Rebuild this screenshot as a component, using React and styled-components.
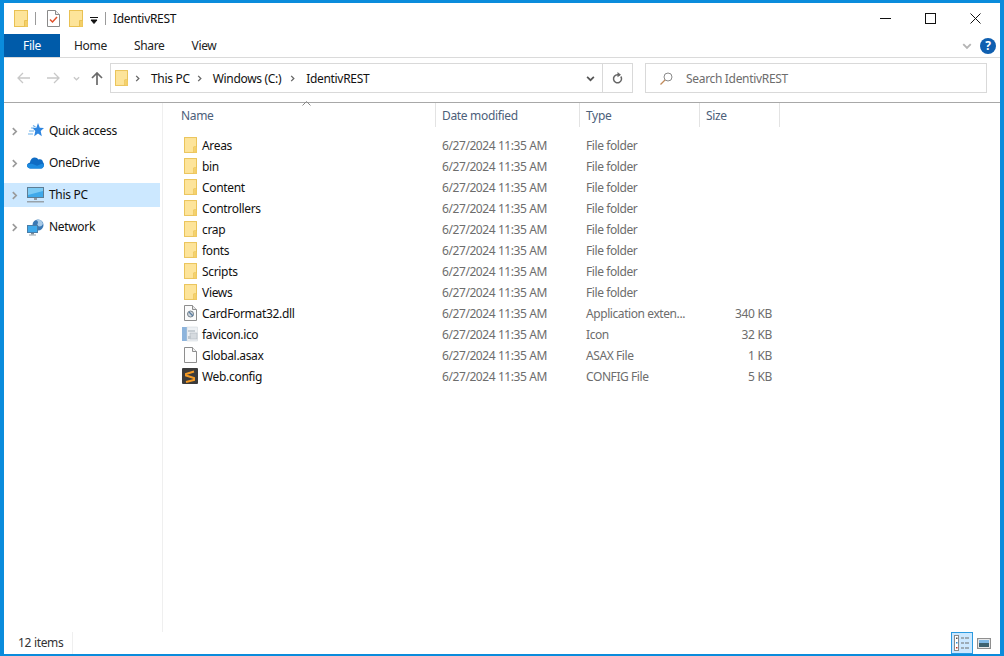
import React from 'react'
import styled, { createGlobalStyle } from 'styled-components'

const GlobalStyle = createGlobalStyle`
html, body {
  margin: 0;
  padding: 0;
  background: #fff;
}
* {
  box-sizing: border-box;
}
`

const FolderIcon = ({ w = 14, h = 17 }) => (
  <svg width={w} height={h} viewBox="0 0 14 17">
    <rect x="0.5" y="0.5" width="13" height="16" fill="#fde49a" stroke="#e9c152" />
    <path d="M10.5 10.5v6M10.5 10.5h3" stroke="#e9c152" fill="#f7d779" />
    <rect x="11" y="11" width="2.5" height="5.5" fill="#f4cf68" />
  </svg>
)

const ChecklistIcon = () => (
  <svg width="13" height="17" viewBox="0 0 13 17">
    <path d="M.5.5h8l4 4v12H.5z" fill="#fff" stroke="#8a8a8a" />
    <path d="M8.5.5v4h4" fill="#eee" stroke="#8a8a8a" />
    <path d="M3 9.500l2.500 2.500L10 7" fill="none" stroke="#e0502a" strokeWidth="1.500" />
  </svg>
)

const QuickIcon = () => (
  <svg width="16" height="16" viewBox="0 0 16 16">
    <path d="M10 0l1.800 4.700 4.200.3-3.300 3 1.100 5.200L10 10.500l-3.800 2.700 1.100-5.200L4.400 5l4-.3z" fill="#2f86e0" />
    <path d="M3 5h3M1 8h5M0 11h5M5 2.500l2.500 1.500" stroke="#6fb1ea" strokeWidth="1.200" />
  </svg>
)

const CloudIcon = () => (
  <svg width="17" height="12" viewBox="0 0 17 12">
    <path d="M3.500 11.500C1.500 11.500 0 10.200 0 8.600c0-1.500 1.200-2.700 2.800-2.900C3.500 2.400 5.300 0.500 7.800 0.500c1.600 0 2.900.8 3.600 2 .6-.3 1-.3 1.600-.3 1.600 0 2.800 1.200 3 3 .6.500 1 1.500 1 2.600 0 2-1.300 3.700-3 3.700z" fill="#0f6cc4" />
    <path d="M3.500 11.500C1.500 11.500 0 10.200 0 8.600c0-1.200 2-2 5-1.800l5 2 5-2 2 1c0 2-1.300 3.700-3 3.700z" fill="#1d8be0" />
  </svg>
)

const MonitorIcon = () => (
  <svg width="17" height="16" viewBox="0 0 17 16">
    <rect x="0.500" y="0.500" width="16" height="10" fill="#3fa9ea" stroke="#5d7d95" />
    <path d="M1 1h15v3L1 8z" fill="#7ccbf5" />
    <rect x="7" y="11" width="3" height="2" fill="#8f9aa3" />
    <rect x="0" y="14" width="17" height="1.500" fill="#98a2aa" />
  </svg>
)

const NetworkIcon = () => (
  <svg width="17" height="17" viewBox="0 0 17 17">
    <circle cx="11" cy="6" r="5.500" fill="#3a78b4" />
    <path d="M9 1c2 1 2.500 2 1.500 4s2 3 4 2l1.500-2c-.3-2.500-2.500-4.500-5-4.500z" fill="#a9cbe8" />
    <rect x="0.500" y="6.500" width="10" height="7" fill="#3fa9ea" stroke="#4a7ea8" />
    <rect x="4" y="14" width="3" height="1.500" fill="#7f8c96" />
    <rect x="2" y="15.500" width="7" height="1" fill="#98a2aa" />
  </svg>
)

const DllIcon = () => (
  <svg width="13" height="16" viewBox="0 0 13 16">
    <path d="M.5.5h8l4 4v11H.5z" fill="#fbfbfb" stroke="#8e8e8e" />
    <path d="M8.500.5v4h4" fill="#e6e6e6" stroke="#8e8e8e" />
    <circle cx="6.500" cy="9" r="3" fill="#cfd6dc" stroke="#77838d" />
    <path d="M5 7l4 4" stroke="#5a7ea3" strokeWidth="1.200" />
  </svg>
)

const IcoIcon = () => (
  <svg width="16" height="16" viewBox="0 0 16 16">
    <rect x="0" y="1" width="5" height="14" fill="#8db4dc" />
    <rect x="5" y="1" width="10.500" height="14" fill="#eef1f4" stroke="#cbd2d8" strokeWidth="0.500" />
    <rect x="6" y="4" width="7" height="2" fill="#c6cdd3" />
    <rect x="8" y="7" width="7" height="6" fill="#d5dadf" stroke="#a9b1b8" strokeWidth="0.500" />
    <rect x="6" y="10" width="3" height="3" fill="#c0c7cd" />
  </svg>
)

const BlankIcon = () => (
  <svg width="13" height="16" viewBox="0 0 13 16">
    <path d="M.5.5h8l4 4v11H.5z" fill="#fdfdfd" stroke="#8e8e8e" />
    <path d="M8.500.5v4h4" fill="#f0f0f0" stroke="#8e8e8e" />
  </svg>
)

const SublimeIcon = () => (
  <svg width="16" height="16" viewBox="0 0 16 16">
    <rect width="16" height="16" rx="1" fill="#3b3b3b" />
    <path d="M12 3.500L4 6v1.500l8 2.500v2L4 14" fill="none" stroke="#f59a23" strokeWidth="2" />
  </svg>
)

const Chevron = ({ color = '#8a8a8a', size = 8, down }) => (
  <svg width={size} height={size} viewBox="0 0 8 8" style={down ? { transform: 'rotate(90deg)' } : undefined}>
    <path d="M2.500 1l3 3-3 3" fill="none" stroke={color} strokeWidth="1.500" />
  </svg>
)

const ArrowLeft = ({ color, flip }) => (
  <svg width="13" height="12" viewBox="0 0 13 12" style={flip ? { transform: 'scaleX(-1)' } : undefined}>
    <path d="M6 1L1 6l5 5M1 6h12" fill="none" stroke={color} strokeWidth="1.300" />
  </svg>
)

const ArrowUp = () => (
  <svg width="12" height="13" viewBox="0 0 12 13">
    <path d="M1 6l5-5 5 5M6 1v12" fill="none" stroke="#6a6a6a" strokeWidth="1.700" />
  </svg>
)

const Refresh = () => (
  <svg width="11" height="13" viewBox="0 0 11 13">
    <path d="M8.800 4.500A4 4 0 1 1 5.500 2.800H8" fill="none" stroke="#666" strokeWidth="1.500" />
    <path d="M5.500 0l3.500 2.800-3.500 2.400z" fill="#666" />
  </svg>
)

const Search = () => (
  <svg width="13" height="13" viewBox="0 0 13 13">
    <circle cx="8" cy="5" r="4" fill="none" stroke="#8a8a8a" />
    <path d="M5 8l-4.500 4.500" stroke="#c08a5a" strokeWidth="1.200" />
  </svg>
)

const DetailsIcon = () => (
  <svg width="16" height="16" viewBox="0 0 16 16">
    <rect x="0.500" y="0.500" width="4" height="15" fill="#fff" stroke="#8a8a8a" />
    <rect x="2" y="2.500" width="1.500" height="1.500" fill="#555" />
    <rect x="2" y="7" width="1.500" height="1.500" fill="#2a8fd8" />
    <rect x="2" y="12" width="1.500" height="1.500" fill="#c0392b" />
    <path d="M7 3h3M11 3h4M7 8h3M11 8h4M7 13h3M11 13h4" stroke="#6e6e6e" strokeWidth="1.200" />
  </svg>
)

const PreviewIcon = () => (
  <svg width="14" height="11" viewBox="0 0 14 11">
    <rect x="0.600" y="0.600" width="12.800" height="9.800" fill="#fff" stroke="#8f8f8f" strokeWidth="1.200" />
    <rect x="2" y="2" width="10" height="3" fill="#7fb9e6" />
    <rect x="2" y="5" width="10" height="4" fill="#3d6270" />
  </svg>
)

const navItems = [
  { label: 'Quick access', icon: <QuickIcon /> },
  { label: 'OneDrive', icon: <CloudIcon /> },
  { label: 'This PC', icon: <MonitorIcon />, active: true },
  { label: 'Network', icon: <NetworkIcon /> },
]

const folder = <FolderIcon w={13} h={16} />
const files = [
  { name: 'Areas', type: 'File folder', icon: folder },
  { name: 'bin', type: 'File folder', icon: folder },
  { name: 'Content', type: 'File folder', icon: folder },
  { name: 'Controllers', type: 'File folder', icon: folder },
  { name: 'crap', type: 'File folder', icon: folder },
  { name: 'fonts', type: 'File folder', icon: folder },
  { name: 'Scripts', type: 'File folder', icon: folder },
  { name: 'Views', type: 'File folder', icon: folder },
  { name: 'CardFormat32.dll', type: 'Application exten...', size: '340 KB', icon: <DllIcon /> },
  { name: 'favicon.ico', type: 'Icon', size: '32 KB', icon: <IcoIcon /> },
  { name: 'Global.asax', type: 'ASAX File', size: '1 KB', icon: <BlankIcon /> },
  { name: 'Web.config', type: 'CONFIG File', size: '5 KB', icon: <SublimeIcon /> },
]

const App = () => {
  return (
    <Window>
      <GlobalStyle />
      <TitleBar>
        <QuickTools>
          <FolderIcon />
          <TitleSep />
          <ChecklistIcon />
          <FolderIcon />
          <Caret>
            <svg width="8" height="7" viewBox="0 0 8 7">
              <path d="M0 .5h8M1 3h6L4 6.500z" stroke="#111" strokeWidth="1" fill="#111" />
            </svg>
          </Caret>
          <TitleSep $last />
        </QuickTools>
        <TitleText>IdentivREST</TitleText>
        <WindowControls>
          <svg width="11" height="11" viewBox="0 0 11 11"><path d="M0 5.500h11" stroke="#111" /></svg>
          <svg width="11" height="11" viewBox="0 0 11 11"><rect x="0.500" y="0.500" width="10" height="10" fill="none" stroke="#111" /></svg>
          <svg width="11" height="11" viewBox="0 0 11 11"><path d="M.5.500l10 10M10.500.5l-10 10" stroke="#111" /></svg>
        </WindowControls>
      </TitleBar>

      <Ribbon>
        <FileTab>File</FileTab>
        <RibbonTab>Home</RibbonTab>
        <RibbonTab>Share</RibbonTab>
        <RibbonTab>View</RibbonTab>
        <RibbonRight>
          <Chevron down color="#b5b5b5" size={10} />
          <Help>?</Help>
        </RibbonRight>
      </Ribbon>

      <AddressRow>
        <NavButtons>
          <ArrowLeft color="#c8c8c8" />
          <ArrowLeft color="#c8c8c8" flip />
          <Chevron down color="#c8c8c8" size={7} />
          <ArrowUp />
        </NavButtons>
        <AddressBox>
          <FolderIcon w={13} h={16} />
          <Crumbs>
            <Chevron color="#666" size={7} />
            <Crumb>This PC</Crumb>
            <Chevron color="#666" size={7} />
            <Crumb>Windows (C:)</Crumb>
            <Chevron color="#666" size={7} />
            <Crumb>IdentivREST</Crumb>
          </Crumbs>
          <AddressDrop><Chevron down color="#555" size={9} /></AddressDrop>
          <RefreshButton><Refresh /></RefreshButton>
        </AddressBox>
        <SearchBox>
          <Search />
          <SearchText>Search IdentivREST</SearchText>
        </SearchBox>
      </AddressRow>

      <Body>
        <NavPane>
          {navItems.map((item) => (
            <NavRow key={item.label} $active={item.active}>
              <Chevron color="#9a9a9a" size={9} />
              <NavIcon>{item.icon}</NavIcon>
              <NavLabel>{item.label}</NavLabel>
            </NavRow>
          ))}
        </NavPane>
        <Main>
          <HeaderRow>
            <HeaderCell $first>
              Name
              <SortMark>
                <svg width="9" height="5" viewBox="0 0 9 5"><path d="M.5 4.500l4-4 4 4" fill="none" stroke="#888" /></svg>
              </SortMark>
            </HeaderCell>
            <HeaderCell>Date modified</HeaderCell>
            <HeaderCell>Type</HeaderCell>
            <HeaderCell>Size</HeaderCell>
          </HeaderRow>
          <FileList>
            {files.map((f) => (
              <FileRow key={f.name}>
                <NameCell>
                  <FileIcon>{f.icon}</FileIcon>
                  {f.name}
                </NameCell>
                <MetaCell>6/27/2024 11:35 AM</MetaCell>
                <MetaCell>{f.type}</MetaCell>
                <SizeCell>{f.size}</SizeCell>
              </FileRow>
            ))}
          </FileList>
        </Main>
      </Body>

      <StatusBar>
        <ItemCount>12 items</ItemCount>
        <ViewButtons>
          <ViewButton $on><DetailsIcon /></ViewButton>
          <ViewButton><PreviewIcon /></ViewButton>
        </ViewButtons>
      </StatusBar>
    </Window>
  )
}

export default App

const Window = styled.div`
width: 1004px;
height: 656px;
overflow: hidden;
display: flex;
flex-direction: column;
background: #fff;
border-style: solid;
border-color: #0a8cdc;
border-width: 3px 4px 2px 4px;
font-family: "Noto Sans", "Open Sans", sans-serif;
font-size: 12px;
letter-spacing: -0.32px;
color: #1a1a1a;
`
const TitleBar = styled.div`
height: 31px;
display: flex;
align-items: center;
flex-shrink: 0;
`
const QuickTools = styled.div`
display: flex;
align-items: center;
padding-left: 10px;
svg + svg {
  margin-left: 9px;
}
`
const TitleSep = styled.div`
width: 1px;
height: 13px;
background: #9a9a9a;
margin: ${(props) => (props.$last ? '0' : '0 11px 0 7px')};
`
const Caret = styled.div`
display: flex;
align-items: center;
padding-top: 3px;
margin: 0 7px;
`
const TitleText = styled.div`
margin-left: 7px;
color: #111;
`
const WindowControls = styled.div`
margin-left: auto;
display: flex;
align-items: center;
gap: 34px;
padding-right: 19px;
`
const Ribbon = styled.div`
height: 24px;
display: flex;
align-items: stretch;
border-bottom: 1px solid #dadada;
flex-shrink: 0;
`
const FileTab = styled.div`
width: 56px;
background: #005ba9;
color: #fff;
display: flex;
align-items: center;
justify-content: center;
`
const RibbonTab = styled.div`
display: flex;
align-items: center;
padding: 0 13.500px;
color: #222;
&:nth-child(2) {
  padding-left: 14px;
}
`
const RibbonRight = styled.div`
margin-left: auto;
display: flex;
align-items: center;
gap: 7px;
padding-right: 4px;
svg {
  margin-right: 1px;
}
`
const Help = styled.div`
width: 16px;
height: 16px;
border-radius: 50%;
background: #0f5fb0;
color: #fff;
font-weight: bold;
font-size: 12px;
letter-spacing: 0;
display: flex;
align-items: center;
justify-content: center;
`
const AddressRow = styled.div`
height: 45px;
display: flex;
align-items: center;
border-bottom: 1px solid #a8a8a8;
flex-shrink: 0;
padding-bottom: 4px;
`
const NavButtons = styled.div`
width: 106px;
display: flex;
align-items: center;
gap: 17px;
padding-left: 13px;
svg:nth-child(3) {
  margin-left: -4px;
  margin-right: -6px;
}
`
const AddressBox = styled.div`
width: 523px;
height: 30px;
border: 1px solid #d9d9d9;
display: flex;
align-items: center;
padding-left: 4px;
`
const Crumbs = styled.div`
display: flex;
align-items: center;
flex: 1;
padding-left: 6px;
`
const Crumb = styled.span`
margin: 0 6px 0 10px;
color: #111;
&:nth-child(4) {
  margin-right: 8px;
}
`
const AddressDrop = styled.div`
width: 26px;
height: 100%;
display: flex;
align-items: center;
justify-content: center;
padding-left: 2px;
`
const RefreshButton = styled.div`
width: 30px;
height: 100%;
border-left: 1px solid #d9d9d9;
display: flex;
align-items: center;
justify-content: center;
`
const SearchBox = styled.div`
width: 342px;
height: 30px;
margin-left: 12px;
border: 1px solid #d9d9d9;
display: flex;
align-items: center;
padding-left: 14px;
gap: 13px;
`
const SearchText = styled.span`
color: #6d6d6d;
`
const Body = styled.div`
flex: 1;
display: flex;
min-height: 0;
`
const NavPane = styled.div`
width: 159px;
border-right: 1px solid #efefef;
padding-top: 16px;
flex-shrink: 0;
`
const NavRow = styled.div`
height: 24px;
margin-bottom: 8px;
margin-right: 2px;
display: flex;
align-items: center;
padding-left: 6px;
background: ${(props) => (props.$active ? '#cce8ff' : 'transparent')};
color: #111;
`
const NavIcon = styled.span`
width: 17px;
display: flex;
justify-content: center;
margin: 0 5px 0 8px;
`
const NavLabel = styled.span`
padding-bottom: 2px;
`
const Main = styled.div`
flex: 1;
display: flex;
flex-direction: column;
min-width: 0;
`
const HeaderRow = styled.div`
height: 26px;
display: grid;
grid-template-columns: 273px 144px 120px 80px;
width: max-content;
padding-bottom: 2px;
`
const HeaderCell = styled.div`
position: relative;
display: flex;
align-items: center;
padding-left: ${(props) => (props.$first ? '18px' : '6px')};
border-right: 1px solid #e3e3e3;
color: #4c607a;
`
const SortMark = styled.span`
position: absolute;
left: 139px;
top: -2px;
line-height: 0;
`
const FileList = styled.div`
padding-top: 5px;
`
const FileRow = styled.div`
height: 21px;
display: grid;
grid-template-columns: 273px 144px 120px 80px;
width: max-content;
align-items: center;
`
const NameCell = styled.div`
display: flex;
align-items: center;
padding: 2px 0 0 19px;
color: #111;
`
const FileIcon = styled.span`
width: 16px;
display: flex;
justify-content: center;
margin: 0 4px 2px 0;
`
const MetaCell = styled.div`
padding: 2px 0 0 6px;
color: #6d6d6d;
letter-spacing: -0.42px;
`
const SizeCell = styled.div`
text-align: right;
padding: 2px 8px 0 0;
color: #6d6d6d;
`
const StatusBar = styled.div`
height: 22px;
display: flex;
align-items: center;
flex-shrink: 0;
`
const ItemCount = styled.div`
width: 69px;
height: 100%;
display: flex;
align-items: center;
padding: 0 0 2px 14px;
border-right: 1px solid #efefef;
color: #333;
`
const ViewButtons = styled.div`
margin-left: auto;
display: flex;
align-items: center;
padding-right: 5px;
`
const ViewButton = styled.div`
width: 22px;
height: 22px;
display: flex;
align-items: center;
justify-content: center;
background: ${(props) => (props.$on ? '#cce8ff' : 'transparent')};
border: 1px solid ${(props) => (props.$on ? '#2b9ae0' : 'transparent')};
`
